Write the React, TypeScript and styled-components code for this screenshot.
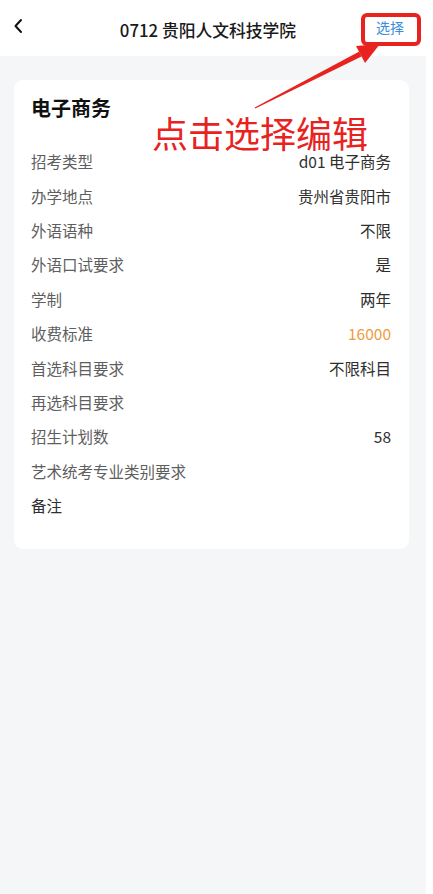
import React from "react";
import styled, { createGlobalStyle } from "styled-components";

const GlobalStyle = createGlobalStyle`
  html, body {
    margin: 0;
    padding: 0;
    background: #ffffff;
  }
  body {
    font-family: "Noto Sans CJK SC", "Noto Sans", sans-serif;
  }
`;

const Page = styled.div`
  position: relative;
  width: 426px;
  min-height: 894px;
  background: #f5f6f8;
  display: flex;
  flex-direction: column;
`;

const Header = styled.header`
  height: 56px;
  background: #ffffff;
  display: grid;
  grid-template-columns: 1fr auto 1fr;
  align-items: center;
  padding: 0 22px 0 12px;
  box-sizing: border-box;
`;

const BackButton = styled.div`
  display: flex;
  align-items: center;
  justify-self: start;
  margin-top: -4px;
`;

const Title = styled.h1`
  margin: 0;
  font-size: 16.8px;
  font-weight: 500;
  color: #1a1a1a;
  margin-top: 3px;
`;

const Action = styled.span`
  justify-self: end;
  font-size: 14px;
  color: #3b8ed8;
  margin-top: -2px;
`;

const Card = styled.section`
  margin: 24px 17px 0 14px;
  background: #ffffff;
  border-radius: 9px;
  padding: 14px 18px 27px 17px;
`;

const CardTitle = styled.h2`
  margin: 0 0 22px;
  font-size: 20px;
  line-height: 28px;
  font-weight: 700;
  color: #111111;
`;

const Row = styled.div`
  height: 34.4px;
  display: flex;
  align-items: center;
  justify-content: space-between;
  font-size: 15.5px;
  line-height: 18px;
`;

const Label = styled.span<{ $dark?: boolean }>`
  color: ${(p) => (p.$dark ? "#2e2e2e" : "#5e5e5e")};
`;

const Value = styled.span<{ $accent?: boolean }>`
  color: ${(p) => (p.$accent ? "#ee9c3f" : "#2e2e2e")};
`;

const Annotation = styled.svg`
  position: absolute;
  left: 0;
  top: 0;
  pointer-events: none;
`;

const Callout = styled.div`
  position: absolute;
  left: 152px;
  top: 115px;
  font-family: "Noto Sans CJK SC", sans-serif;
  font-size: 36px;
  line-height: 34px;
  color: #e8231f;
  white-space: nowrap;
`;

const rows: { label: string; value?: string; accent?: boolean; dark?: boolean }[] = [
  { label: "招考类型", value: "d01 电子商务" },
  { label: "办学地点", value: "贵州省贵阳市" },
  { label: "外语语种", value: "不限" },
  { label: "外语口试要求", value: "是" },
  { label: "学制", value: "两年" },
  { label: "收费标准", value: "16000", accent: true },
  { label: "首选科目要求", value: "不限科目" },
  { label: "再选科目要求" },
  { label: "招生计划数", value: "58" },
  { label: "艺术统考专业类别要求" },
  { label: "备注", dark: true },
];

export default function App() {
  return (
    <>
      <GlobalStyle />
      <Page>
        <Header>
          <BackButton>
            <svg width="12" height="16" viewBox="0 0 12 16">
              <path d="M9 2 L3.5 8 L9 14" fill="none" stroke="#111" strokeWidth="2" strokeLinecap="round" strokeLinejoin="round" />
            </svg>
          </BackButton>
          <Title>0712 贵阳人文科技学院</Title>
          <Action>选择</Action>
        </Header>
        <Card>
          <CardTitle>电子商务</CardTitle>
          {rows.map((r) => (
            <Row key={r.label}>
              <Label $dark={r.dark}>{r.label}</Label>
              {r.value && <Value $accent={r.accent}>{r.value}</Value>}
            </Row>
          ))}
        </Card>
        <Annotation width="433" height="200" viewBox="0 0 433 200">
          <rect x="363" y="15" width="56" height="29" rx="4" fill="none" stroke="#e8231f" strokeWidth="4" />
          <polygon
            points="254.7,107.6 255.3,108.4 361.5,56.5 359.3,51.5"
            fill="#e8231f"
          />
          <polygon points="380,44 356,46 365,63" fill="#e8231f" />
        </Annotation>
        <Callout>点击选择编辑</Callout>
      </Page>
    </>
  );
}
